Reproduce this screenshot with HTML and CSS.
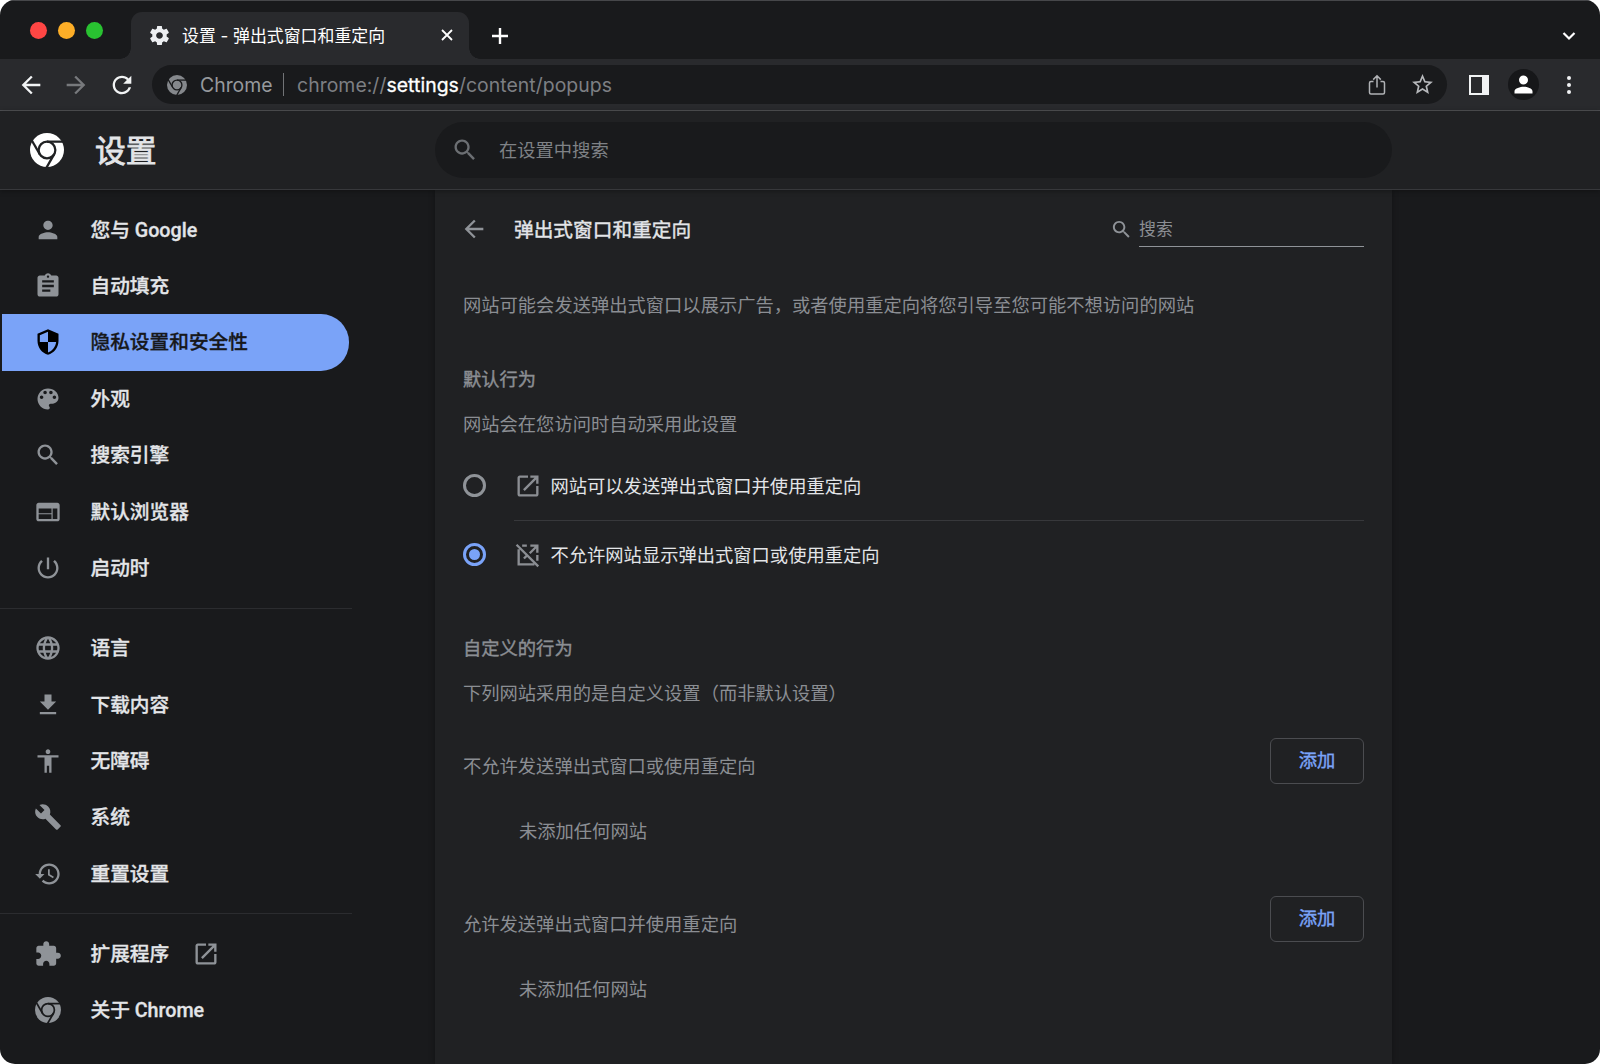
FILE: index.html
```html
<!DOCTYPE html>
<html lang="zh-CN">
<head>
<meta charset="utf-8">
<title>设置 - 弹出式窗口和重定向</title>
<link rel="stylesheet" href="styles.css">
</head>
<body>
<svg class="defs" width="0" height="0" aria-hidden="true">
  <defs>
    <mask id="chrome-cut" maskUnits="userSpaceOnUse" x="0" y="0" width="24" height="24">
      <rect width="24" height="24" fill="#fff"/>
      <g fill="none" stroke="#000" stroke-width="1.6">
        <circle cx="12" cy="12" r="5.900"/>
        <path d="M12 6.100H24"/>
        <path d="M12 6.100H24" transform="rotate(120 12 12)"/>
        <path d="M12 6.100H24" transform="rotate(240 12 12)"/>
      </g>
    </mask>
    <symbol id="chrome" viewBox="0 0 24 24"><circle cx="12" cy="12" r="12" mask="url(#chrome-cut)"/></symbol>
    <symbol id="person" viewBox="0 0 24 24"><path d="M12 12c2.21 0 4-1.79 4-4s-1.79-4-4-4-4 1.79-4 4 1.79 4 4 4zm0 2c-2.67 0-8 1.34-8 4v2h16v-2c0-2.66-5.33-4-8-4z"/></symbol>
    <symbol id="clipboard" viewBox="0 0 24 24"><path d="M19 3h-4.18C14.4 1.84 13.3 1 12 1c-1.3 0-2.4.84-2.82 2H5c-1.1 0-2 .9-2 2v14c0 1.1.9 2 2 2h14c1.1 0 2-.9 2-2V5c0-1.1-.9-2-2-2zm-7 0c.55 0 1 .45 1 1s-.45 1-1 1-1-.45-1-1 .45-1 1-1zm2 14H7v-2h7v2zm3-4H7v-2h10v2zm0-4H7V7h10v2z"/></symbol>
    <symbol id="shield" viewBox="0 0 24 24"><path d="M12 1L3 5v6c0 5.55 3.84 10.74 9 12 5.16-1.26 9-6.45 9-12V5l-9-4zm0 10.99h7c-.53 4.12-3.28 7.79-7 8.94V12H5V6.3l7-3.11v8.8z"/></symbol>
    <symbol id="palette" viewBox="0 0 24 24"><path d="M12 3c-4.97 0-9 4.03-9 9s4.03 9 9 9c.83 0 1.5-.67 1.5-1.5 0-.39-.15-.74-.39-1.01-.23-.26-.38-.61-.38-.99 0-.83.67-1.5 1.5-1.5H16c2.76 0 5-2.24 5-5 0-4.42-4.03-8-9-8zm-5.5 9c-.83 0-1.5-.67-1.5-1.5S5.67 9 6.5 9 8 9.67 8 10.500 7.330 12 6.500 12zm3-4C8.670 8 8 7.330 8 6.500S8.670 5 9.500 5s1.500.67 1.500 1.500S10.330 8 9.500 8zm5 0c-.83 0-1.500-.67-1.500-1.500S13.670 5 14.500 5s1.500.67 1.500 1.500S15.330 8 14.500 8zm3 4c-.83 0-1.500-.67-1.500-1.500S16.670 9 17.500 9s1.500.67 1.500 1.500-.67 1.500-1.500 1.500z"/></symbol>
    <symbol id="search" viewBox="0 0 24 24"><path d="M15.5 14h-.79l-.28-.27C15.41 12.59 16 11.11 16 9.5 16 5.91 13.09 3 9.5 3S3 5.91 3 9.5 5.91 16 9.5 16c1.610 0 3.090-.59 4.230-1.570l.27.28v.79l5 4.990L20.490 19l-4.990-5zm-6 0C7.010 14 5 11.990 5 9.500S7.010 5 9.500 5 14 7.010 14 9.500 11.990 14 9.500 14z"/></symbol>
    <symbol id="web" viewBox="0 0 24 24"><path d="M20 4H4c-1.100 0-1.990.9-1.990 2L2 18c0 1.100.9 2 2 2h16c1.100 0 2-.9 2-2V6c0-1.100-.9-2-2-2zm-5 14H4v-4h11v4zm0-5H4V9h11v4zm5 5h-4V9h4v9z"/></symbol>
    <symbol id="power" viewBox="0 0 24 24"><path d="M13 3h-2v10h2V3zm4.830 2.170l-1.420 1.420C17.990 7.860 19 9.810 19 12c0 3.870-3.130 7-7 7s-7-3.130-7-7c0-2.190 1.010-4.140 2.580-5.420L6.170 5.170C4.230 6.820 3 9.260 3 12c0 4.970 4.030 9 9 9s9-4.030 9-9c0-2.740-1.230-5.180-3.170-6.830z"/></symbol>
    <symbol id="globe" viewBox="0 0 24 24"><path d="M11.990 2C6.470 2 2 6.480 2 12s4.470 10 9.990 10C17.520 22 22 17.520 22 12S17.520 2 11.990 2zm6.930 6h-2.950c-.32-1.250-.78-2.450-1.380-3.560 1.840.63 3.370 1.910 4.330 3.560zM12 4.040c.83 1.200 1.480 2.530 1.910 3.960h-3.820c.43-1.430 1.080-2.760 1.910-3.960zM4.260 14C4.100 13.360 4 12.690 4 12s.1-1.360.26-2h3.380c-.08.66-.14 1.320-.14 2 0 .68.06 1.340.14 2H4.260zm.82 2h2.950c.32 1.250.78 2.450 1.380 3.560-1.840-.63-3.370-1.900-4.330-3.560zm2.950-8H5.080c.96-1.660 2.490-2.930 4.330-3.560C8.810 5.550 8.350 6.750 8.030 8zM12 19.960c-.83-1.200-1.480-2.530-1.910-3.960h3.820c-.43 1.430-1.080 2.760-1.910 3.960zM14.340 14H9.660c-.09-.66-.16-1.320-.16-2 0-.68.07-1.350.16-2h4.680c.09.65.16 1.320.16 2 0 .68-.07 1.340-.16 2zm.25 5.560c.6-1.110 1.060-2.310 1.380-3.560h2.950c-.96 1.650-2.490 2.930-4.330 3.560zM16.360 14c.08-.66.14-1.320.14-2 0-.68-.06-1.340-.14-2h3.380c.16.64.26 1.310.26 2s-.1 1.360-.26 2h-3.380z"/></symbol>
    <symbol id="download" viewBox="0 0 24 24"><path d="M19 9h-4V3H9v6H5l7 7 7-7zM5 18v2h14v-2H5z"/></symbol>
    <symbol id="access" viewBox="0 0 24 24"><path d="M12 2c1.100 0 2 .9 2 2s-.9 2-2 2-2-.9-2-2 .9-2 2-2zm9 7h-6v13h-2v-6h-2v6H9V9H3V7h18v2z"/></symbol>
    <symbol id="wrench" viewBox="0 0 24 24"><path d="M22.700 19l-9.100-9.100c.9-2.300.4-5-1.500-6.900-2-2-5-2.400-7.400-1.300L9 6 6 9 1.600 4.700C.4 7.100.9 10.100 2.900 12.100c1.900 1.900 4.600 2.400 6.900 1.500l9.100 9.100c.4.4 1 .4 1.400 0l2.300-2.300c.5-.4.5-1.100.1-1.400z"/></symbol>
    <symbol id="history" viewBox="0 0 24 24"><path d="M13 3c-4.970 0-9 4.030-9 9H1l3.890 3.890.07.14L9 12H6c0-3.870 3.130-7 7-7s7 3.130 7 7-3.130 7-7 7c-1.930 0-3.680-.79-4.940-2.060l-1.420 1.420C8.270 19.990 10.510 21 13 21c4.970 0 9-4.030 9-9s-4.030-9-9-9zm-1 5v5l4.280 2.540.72-1.210-3.500-2.080V8H12z"/></symbol>
    <symbol id="puzzle" viewBox="0 0 24 24"><path d="M20.500 11H19V7c0-1.100-.9-2-2-2h-4V3.500C13 2.120 11.880 1 10.500 1S8 2.120 8 3.500V5H4c-1.100 0-1.990.9-1.990 2v3.800H3.500c1.490 0 2.700 1.210 2.700 2.700s-1.210 2.700-2.700 2.700H2V20c0 1.100.9 2 2 2h3.800v-1.500c0-1.490 1.210-2.700 2.700-2.700 1.490 0 2.700 1.210 2.700 2.700V22H17c1.100 0 2-.9 2-2v-4h1.500c1.380 0 2.500-1.120 2.500-2.500S21.880 11 20.500 11z"/></symbol>
    <symbol id="launch" viewBox="0 0 24 24"><path d="M19 19H5V5h7V3H5c-1.110 0-2 .9-2 2v14c0 1.100.89 2 2 2h14c1.100 0 2-.9 2-2v-7h-2v7zM14 3v2h3.590l-9.830 9.830 1.410 1.410L19 6.410V10h2V3h-7z"/></symbol>
    <symbol id="launch-off" viewBox="0 0 24 24"><path fill="none" stroke="currentColor" stroke-width="2" d="M2.200 3.200L20.800 21.800M4 7v13h13.500M7 4h4M14 4h6v6M20 12v5M19.500 4.500L13.500 10.500M11 12.500L8.500 15"/></symbol>
    <symbol id="gear" viewBox="0 0 24 24"><path d="M19.430 12.980c.04-.32.07-.64.07-.98s-.03-.66-.07-.98l2.110-1.650c.19-.15.24-.42.12-.64l-2-3.460c-.12-.22-.39-.3-.61-.22l-2.490 1c-.52-.4-1.080-.73-1.690-.98l-.38-2.650C14.460 2.180 14.250 2 14 2h-4c-.25 0-.46.18-.49.42l-.38 2.650c-.61.25-1.170.59-1.690.98l-2.490-1c-.23-.09-.49 0-.61.22l-2 3.460c-.13.22-.07.49.12.64l2.110 1.650c-.04.32-.07.65-.07.98s.03.66.07.98l-2.110 1.650c-.19.15-.24.42-.12.64l2 3.460c.12.22.39.3.61.22l2.490-1c.52.4 1.080.73 1.690.98l.38 2.650c.03.24.24.42.49.42h4c.25 0 .46-.18.49-.42l.38-2.650c.61-.25 1.170-.59 1.690-.98l2.490 1c.23.09.49 0 .61-.22l2-3.460c.12-.22.07-.49-.12-.64l-2.110-1.650zM12 15.500c-1.930 0-3.500-1.570-3.500-3.500s1.570-3.500 3.500-3.500 3.500 1.570 3.500 3.500-1.570 3.500-3.500 3.500z"/></symbol>
    <symbol id="back" viewBox="0 0 24 24"><path d="M20 11H7.830l5.590-5.590L12 4l-8 8 8 8 1.410-1.410L7.830 13H20v-2z"/></symbol>
    <symbol id="reload" viewBox="0 0 24 24"><path d="M17.650 6.350C16.200 4.900 14.210 4 12 4c-4.420 0-7.990 3.580-7.990 8s3.570 8 7.990 8c3.730 0 6.840-2.550 7.730-6h-2.080c-.82 2.330-3.040 4-5.650 4-3.310 0-6-2.690-6-6s2.690-6 6-6c1.660 0 3.140.69 4.220 1.780L13 11h7V4l-2.350 2.350z"/></symbol>
    <symbol id="star" viewBox="0 0 24 24"><path d="M22 9.240l-7.190-.62L12 2 9.190 8.630 2 9.240l5.460 4.730L5.820 21 12 17.270 18.180 21l-1.630-7.030L22 9.240zM12 15.400l-3.760 2.270 1-4.280-3.320-2.880 4.380-.38L12 6.100l1.710 4.040 4.380.38-3.320 2.880 1 4.280L12 15.400z"/></symbol>
  </defs>
</svg>

<div class="window">
  <div class="tabstrip">
    <div class="lights"><i class="light red"></i><i class="light amber"></i><i class="light green"></i></div>
    <div class="tab">
      <svg class="tab-gear"><use href="#gear"/></svg>
      <span class="tab-title">设置 - 弹出式窗口和重定向</span>
      <svg class="tab-close" viewBox="0 0 12 12"><path d="M1 1l10 10M11 1L1 11"/></svg>
    </div>
    <svg class="new-tab" viewBox="0 0 18 18"><path d="M9 1v16M1 9h16"/></svg>
    <svg class="tab-search" viewBox="0 0 14 10"><path d="M1.500 2l5.500 5.500L12.500 2"/></svg>
  </div>

  <div class="toolbar">
    <svg class="tool"><use href="#back"/></svg>
    <svg class="tool forward"><use href="#back"/></svg>
    <svg class="tool reload"><use href="#reload"/></svg>
    <div class="omnibox">
      <svg class="omni-chrome"><use href="#chrome"/></svg>
      <span class="omni-chip">Chrome</span>
      <span class="omni-sep"></span>
      <span class="omni-url">chrome://<b>settings</b>/content/popups</span>
      <svg class="share" viewBox="0 0 18 22"><path d="M5.500 7.500H3a1.500 1.500 0 0 0-1.500 1.500v9.500A1.500 1.500 0 0 0 3 20h12a1.500 1.500 0 0 0 1.500-1.500V9A1.500 1.500 0 0 0 15 7.500h-2.500M9 13.500V2M5.200 5.600L9 1.800l3.800 3.800"/></svg>
      <svg class="star"><use href="#star"/></svg>
    </div>
    <span class="side-panel"></span>
    <span class="avatar"><svg><use href="#person"/></svg></span>
    <span class="dots"><i></i><i></i><i></i></span>
  </div>

  <header class="header">
    <div class="brand">
      <svg><use href="#chrome"/></svg>
      <h1>设置</h1>
    </div>
    <div class="searchbar"><svg><use href="#search"/></svg><span>在设置中搜索</span></div>
  </header>

  <div class="body">
    <nav class="nav">
      <a class="item"><svg><use href="#person"/></svg>您与 Google</a>
      <a class="item"><svg><use href="#clipboard"/></svg>自动填充</a>
      <a class="item selected"><svg><use href="#shield"/></svg>隐私设置和安全性</a>
      <a class="item"><svg><use href="#palette"/></svg>外观</a>
      <a class="item"><svg><use href="#search"/></svg>搜索引擎</a>
      <a class="item"><svg><use href="#web"/></svg>默认浏览器</a>
      <a class="item"><svg><use href="#power"/></svg>启动时</a>
      <hr>
      <a class="item"><svg><use href="#globe"/></svg>语言</a>
      <a class="item"><svg><use href="#download"/></svg>下载内容</a>
      <a class="item"><svg><use href="#access"/></svg>无障碍</a>
      <a class="item"><svg><use href="#wrench"/></svg>系统</a>
      <a class="item"><svg><use href="#history"/></svg>重置设置</a>
      <hr>
      <a class="item"><svg><use href="#puzzle"/></svg>扩展程序<svg class="external"><use href="#launch"/></svg></a>
      <a class="item about"><svg><use href="#chrome"/></svg>关于 Chrome</a>
    </nav>

    <main class="panel">
      <div class="title-row">
        <svg class="back"><use href="#back"/></svg>
        <h2>弹出式窗口和重定向</h2>
        <svg class="find-icon"><use href="#search"/></svg>
        <div class="find">搜索</div>
      </div>
      <p class="desc">网站可能会发送弹出式窗口以展示广告，或者使用重定向将您引导至您可能不想访问的网站</p>
      <h3>默认行为</h3>
      <p class="sub">网站会在您访问时自动采用此设置</p>
      <div class="option">
        <span class="radio"></span>
        <div class="option-body lined"><svg><use href="#launch"/></svg>网站可以发送弹出式窗口并使用重定向</div>
      </div>
      <div class="option">
        <span class="radio on"></span>
        <div class="option-body"><svg><use href="#launch-off"/></svg>不允许网站显示弹出式窗口或使用重定向</div>
      </div>
      <h3 class="custom">自定义的行为</h3>
      <p class="sub">下列网站采用的是自定义设置（而非默认设置）</p>
      <section class="list">
        <div class="list-head"><span>不允许发送弹出式窗口或使用重定向</span><button>添加</button></div>
        <p class="empty">未添加任何网站</p>
      </section>
      <section class="list">
        <div class="list-head"><span>允许发送弹出式窗口并使用重定向</span><button>添加</button></div>
        <p class="empty">未添加任何网站</p>
      </section>
    </main>
  </div>
</div>
</body>
</html>
```
FILE: styles.css
```css
* { box-sizing: border-box; }
body { margin: 0; background: #fff; font-family: Roboto, "Noto Sans CJK SC", sans-serif; color: #e3e5e8; }
h1, h2, h3, p { margin: 0; font-weight: 400; }
h1, h2, h3, button { -webkit-text-stroke: .4px currentColor; }
svg { display: block; flex: none; fill: currentColor; }
.defs { position: absolute; }

.window { width: 1600px; height: 1064px; border-radius: 15px; overflow: hidden; background: #191a1c; display: flex; flex-direction: column; }

.tabstrip { height: 59px; flex: none; display: flex; align-items: center; border-top: 1px solid #46474a; color: #fff; }
.lights { display: flex; gap: 11px; padding-left: 30px; width: 131px; }
.light { width: 17px; height: 17px; border-radius: 50%; }
.red { background: #ff4644; }
.amber { background: #fdae27; }
.green { background: #29c231; }
.tab { position: relative; width: 338px; height: 47px; align-self: flex-end; display: flex; align-items: center; padding: 0 16px 1px 17px; background: #292a2d; border-radius: 11px 11px 0 0; }
.tab::before, .tab::after { content: ""; position: absolute; bottom: 0; width: 11px; height: 11px; }
.tab::before { left: -11px; background: radial-gradient(circle at 0 0, transparent 10.5px, #292a2d 11px); }
.tab::after { right: -11px; background: radial-gradient(circle at 100% 0, transparent 10.5px, #292a2d 11px); }
.tab-gear { width: 23px; height: 23px; color: #eceef1; }
.tab-title { font-family: Inter, "Noto Sans CJK SC", sans-serif; font-size: 16.9px; margin: -2px 0 0 11px; flex: 1; white-space: nowrap; }
.tab-close { width: 12px; height: 12px; fill: none; stroke: #fff; stroke-width: 1.8; }
.new-tab { width: 18px; height: 18px; margin: 11px 0 0 22px; fill: none; stroke: #fff; stroke-width: 2.4; }
.tab-search { width: 14px; height: 10px; margin: 11px 24px 0 auto; fill: none; stroke: #fff; stroke-width: 2.2; }

.toolbar { height: 52px; flex: none; display: flex; align-items: center; padding: 0 28px 0 17px; background: #292a2d; border-bottom: 1px solid #505154; color: #f1f3f4; }
.tool { width: 28px; height: 28px; margin-right: 17px; }
.forward { transform: scaleX(-1); color: #77797c; }
.tool.reload { margin: 0 16px 0 1px; }
.omnibox { width: 1295px; height: 39px; border-radius: 20px; background: #191a1c; display: flex; align-items: center; font-family: Inter, sans-serif; font-size: 19.4px; color: #8b8e92; padding: 0 12px 0 15px; }
.omni-chrome { width: 20px; height: 20px; color: #85888c; margin-right: 13px; }
.omni-chip { color: #96999d; width: 73px; }
.omni-sep { width: 1px; height: 23px; background: #717376; margin: 0 13px 0 10px; }
.omni-url { flex: 1; color: #7d7f83; letter-spacing: .05px; }
.omni-url b { font-weight: 400; color: #fff; -webkit-text-stroke: .3px #fff; }
.share { width: 18px; height: 22px; margin-right: 24px; fill: none; stroke: #b0b2b5; stroke-width: 1.5; }
.star { width: 25px; height: 25px; color: #b7b9bc; }
.side-panel { width: 20px; height: 20px; margin-left: 22px; border: 2px solid #f1f3f4; border-right-width: 7px; }
.avatar { width: 31px; height: 31px; border-radius: 50%; background: #161719; margin-left: 19px; display: flex; align-items: center; justify-content: center; color: #fff; }
.avatar svg { width: 27px; height: 27px; }
.dots { display: flex; flex-direction: column; gap: 3px; margin-left: 28px; }
.dots i { width: 4px; height: 4px; border-radius: 50%; background: #f1f3f4; }

.header { height: 79px; flex: none; display: flex; align-items: center; background: #202123; border-bottom: 1px solid #37383b; box-shadow: 0 1px 5px rgba(0, 0, 0, .35); z-index: 1; }
.brand { width: 435px; padding-left: 30px; display: flex; align-items: center; gap: 31px; }
.brand svg { width: 34px; height: 34px; color: #fff; }
h1 { font-size: 30.8px; line-height: 44px; padding-top: 3px; -webkit-text-stroke-width: .8px; }
.searchbar { width: 957px; height: 56px; border-radius: 28px; background: #191a1c; display: flex; align-items: center; gap: 20px; padding: 0 0 1px 16px; font-size: 18.3px; color: #7f8286; }
.searchbar svg { width: 28px; height: 28px; margin-top: 1px; color: #6c6f73; }
.searchbar span { padding-bottom: 1px; }

.body { flex: 1; display: flex; align-items: stretch; }
.nav { width: 435px; padding-top: 11.500px; font-size: 19.7px; font-weight: 500; -webkit-text-stroke: .3px currentColor; }
.item { height: 56.4px; width: 349px; display: flex; align-items: center; padding: 0 0 3px 34px; }
.item svg { width: 28px; height: 28px; margin: 3px 28.500px 0 0; color: #8f9398; }
.item.selected { margin-left: 2px; width: 347px; padding-left: 32px; background: #7aa3f8; border-radius: 0 28px 28px 0; color: #17181b; }
.item.selected svg { color: #000; }
.item .external { margin: 3px 0 0 22.500px; width: 28px; height: 28px; }
.item.about svg { width: 26px; height: 26px; margin: 3px 29.500px 0 1px; }
.nav hr { width: 352px; height: 1px; border: 0; background: #2b2c2f; margin: 11.500px 0 11.200px; }

.panel { width: 957px; padding: 0 28px; background: #202123; box-shadow: 0 0 6px rgba(0, 0, 0, .3); font-size: 18.3px; color: #8b8e93; }
.title-row { height: 78px; display: flex; align-items: center; }
.back { width: 28px; height: 28px; margin: 0 26px 0 -3px; color: #8f9398; }
h2 { font-size: 19.7px; color: #e3e5e8; flex: 1; padding-bottom: 2px; }
.find-icon { width: 23px; height: 23px; margin-right: 6px; color: #8f9398; }
.find { width: 225px; height: 36px; border-bottom: 1px solid #8f9398; font-size: 16.9px; line-height: 36px; }
.desc { height: 76px; line-height: 76px; }
h3 { height: 44px; line-height: 46px; margin-top: 13px; font-size: 18.3px; }
.sub { height: 45px; line-height: 47px; }
.option { height: 69px; display: flex; align-items: center; }
.sub + .option { margin-top: 6px; }
.radio { width: 23px; height: 23px; border: 2.800px solid #8f9398; border-radius: 50%; margin: 0 28px 2px -.5px; display: flex; }
.radio { border-width: 3px; }
.radio.on { border-color: #7aa3f8; }
.radio.on::before { content: ""; width: 11px; height: 11px; margin: auto; border-radius: 50%; background: #7aa3f8; }
.option-body { flex: 1; height: 69px; display: flex; align-items: center; gap: 9px; padding-bottom: 3px; color: #e3e5e8; }
.option-body svg { width: 28px; height: 28px; margin-top: 2px; color: #8b8e93; }
.lined { border-bottom: 1px solid #37383b; padding-bottom: 2px; }
.custom { margin-top: 36px; }
.list { height: 158px; }
.sub + .list { margin-top: 23px; }
.list-head { height: 46px; display: flex; justify-content: space-between; align-items: flex-start; }
.list-head span { line-height: 58px; }
button { width: 94px; height: 46px; border: 1px solid #4b4c50; border-radius: 6px; background: none; padding: 0; font: 400 18.3px/44px Roboto, "Noto Sans CJK SC", sans-serif; color: #7aa3f8; }
.empty { line-height: 46px; margin: 25px 0 0 56px; }
```
